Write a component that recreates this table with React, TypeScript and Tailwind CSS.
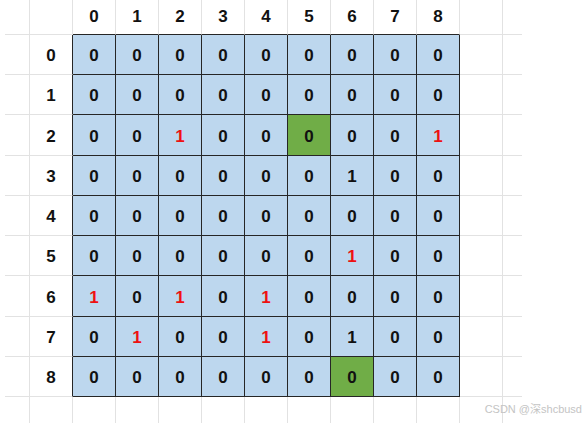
import React from "react";

type Cell = { v: string; red?: boolean; green?: boolean };

const R = (v: string): Cell => ({ v, red: true });
const G = (v: string): Cell => ({ v, green: true });
const Z: Cell = { v: "0" };
const O: Cell = { v: "1" };

const data: Cell[][] = [
  [Z, Z, Z, Z, Z, Z, Z, Z, Z],
  [Z, Z, Z, Z, Z, Z, Z, Z, Z],
  [Z, Z, R("1"), Z, Z, G("0"), Z, Z, R("1")],
  [Z, Z, Z, Z, Z, Z, O, Z, Z],
  [Z, Z, Z, Z, Z, Z, Z, Z, Z],
  [Z, Z, Z, Z, Z, Z, R("1"), Z, Z],
  [R("1"), Z, R("1"), Z, R("1"), Z, Z, Z, Z],
  [Z, R("1"), Z, Z, R("1"), Z, O, Z, Z],
  [Z, Z, Z, Z, Z, Z, G("0"), Z, Z],
];

const rowHeights = ["h-[40px]", "h-[40px]", "h-[41px]", "h-[40px]", "h-[40px]", "h-[40px]", "h-[41px]", "h-[40px]", "h-[40px]"];

export default function App() {
  const font = { fontFamily: '"Liberation Sans", Arial, sans-serif' };
  return (
    <div className="relative w-[585px] h-[423px] bg-white overflow-hidden" style={font}>
      <div className="grid grid-cols-[5px_25px_43px_repeat(9,43px)_43px_19px] text-[17px] font-bold text-[#111]">
        {/* header row */}
        <div className="h-[35px]" />
        <div className="h-[35px] border-r border-b border-[#e2e2e2]" />
        <div className="h-[35px] border-r border-b border-[#e2e2e2]" />
        {Array.from({ length: 9 }).map((_, c) => (
          <div
            key={`h${c}`}
            className="h-[35px] flex items-center justify-center border-r border-r-[#e2e2e2] border-b border-b-[#262626]"
          >
            {c}
          </div>
        ))}
        <div className="h-[35px] border-r border-b border-[#e2e2e2]" />
        <div className="h-[35px] border-b border-[#e2e2e2]" />

        {data.map((row, r) => (
          <React.Fragment key={`r${r}`}>
            <div className={rowHeights[r]} />
            <div className={`${rowHeights[r]} border-r border-b border-[#e2e2e2]`} />
            <div
              className={`${rowHeights[r]} flex items-center justify-center pt-[3px] border-b border-b-[#e2e2e2] border-r border-r-[#262626]`}
            >
              {r}
            </div>
            {row.map((cell, c) => (
              <div
                key={`c${r}-${c}`}
                className={`${rowHeights[r]} flex items-center justify-center pt-[3px] border-r border-b border-[#262626] ${
                  cell.green ? "bg-[#70ad47]" : "bg-[#bdd7ee]"
                } ${cell.red ? "text-[#ee1111]" : "text-[#111]"}`}
              >
                {cell.v}
              </div>
            ))}
            <div className={`${rowHeights[r]} border-r border-b border-[#e2e2e2]`} />
            <div className={`${rowHeights[r]} border-b border-[#e2e2e2]`} />
          </React.Fragment>
        ))}

        {/* filler row */}
        <div className="h-[30px]" />
        <div className="h-[30px] border-r border-[#e2e2e2]" />
        <div className="h-[30px] border-r border-[#e2e2e2]" />
        {Array.from({ length: 9 }).map((_, c) => (
          <div key={`f${c}`} className="h-[30px] border-r border-[#e2e2e2]" />
        ))}
        <div className="h-[30px] border-r border-[#e2e2e2]" />
        <div className="h-[30px]" />
      </div>

      <div
        className="absolute right-[3px] bottom-[6px] text-[11px] text-[#c4c4c4]"
        style={{ fontFamily: '"Liberation Sans", "Noto Sans CJK SC", sans-serif' }}
      >
        CSDN @深shcbusd
      </div>
    </div>
  );
}
